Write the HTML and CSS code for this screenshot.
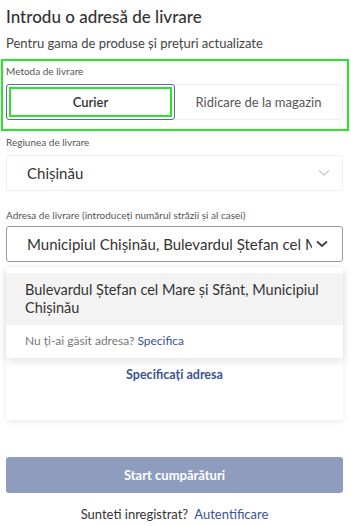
FILE: index.html
```html
<!DOCTYPE html>
<html lang="ro">
<head>
    <meta charset="UTF-8">
    <title>Adresa de livrare</title>
    <link rel="stylesheet" href="styles.css">
</head>
<body>
<div class="page">
    <h1 class="title">Introdu o adresă de livrare</h1>
    <p class="subtitle">Pentru gama de produse și prețuri actualizate</p>

    <!-- metoda de livrare -->
    <div class="method">
        <div class="label">Metoda de livrare</div>
        <div class="segments">
            <div class="seg seg-active"><span class="seg-inner">Curier</span></div>
            <div class="seg">Ridicare de la magazin</div>
        </div>
    </div>

    <div class="label label-region">Regiunea de livrare</div>
    <div class="select">
        <span>Chișinău</span>
        <svg class="chev chev-light" width="12" height="8" viewBox="0 0 12 8"><polyline points="1,1.5 6,6 11,1.5" fill="none" stroke="currentColor" stroke-width="1.4"/></svg>
    </div>

    <div class="label label-address">Adresa de livrare (introduceți numărul străzii și al casei)</div>
    <div class="select select-input">
        <span class="clip">Municipiul Chișinău, Bulevardul Ștefan cel Mare și Sfânt</span>
        <svg class="chev" width="12" height="8" viewBox="0 0 12 8"><polyline points="1,1.5 6,6 11,1.5" fill="none" stroke="currentColor" stroke-width="2"/></svg>
    </div>

    <!-- card cu lista de sugestii -->
    <div class="card">
        <div class="dropdown">
            <div class="option">Bulevardul Ștefan cel Mare și Sfânt, Municipiul Chișinău</div>
            <div class="notfound">Nu ți-ai găsit adresa? <a href="#">Specifica</a></div>
        </div>
        <div class="specify">Specificați adresa</div>
    </div>

    <button class="start">Start cumpărături</button>
    <p class="login">Sunteti inregistrat?&nbsp; <a href="#">Autentificare</a></p>
</div>
</body>
</html>
```

FILE: styles.css
```css
* {
    margin: 0;
    padding: 0;
    box-sizing: border-box;
}

body {
    font-family: Lato, "Noto Sans", sans-serif;
    color: #333;
    background: #fff;
}

a {
    color: #3b5394;
    text-decoration: none;
}

.page {
    padding: 0 8px 0 6px;
}

.title {
    font-size: 17px;
    font-weight: 500;
    line-height: 22px;
    padding-top: 6px;
    color: #333;
}

.subtitle {
    font-size: 13px;
    line-height: 18px;
    margin-top: 6px;
    color: #444;
}

.method {
    margin: 7px -6px 0 -5px;
    border: 2px solid #2be52b;
    padding: 1px 4px 9px 3px;
}

.label {
    font-size: 10px;
    line-height: 14px;
    color: #555;
}

.method .label {
    padding-top: 2px;
}

.segments {
    display: flex;
    margin-top: 6px;
    height: 36px;
}

.seg {
    flex: 1;
    display: flex;
    align-items: center;
    justify-content: center;
    font-size: 13px;
    color: #555;
    border: 1px solid #f0f0f0;
    border-left: none;
    border-radius: 0 3px 3px 0;
}

.seg-active {
    flex: 0 0 169px;
    border: 1px solid #5b6c91;
    border-radius: 3px;
    padding: 2px;
    color: #333;
    font-weight: 600;
}

.seg-inner {
    width: 100%;
    height: 100%;
    border: 2px solid #2be52b;
    display: flex;
    align-items: center;
    justify-content: center;
}

.label-region {
    margin-top: 4px;
}

.select {
    margin-top: 6px;
    height: 36px;
    border: 1px solid #f0f0f0;
    border-radius: 3px;
    display: flex;
    align-items: center;
    padding: 0 12px 0 20px;
    font-size: 15px;
    color: #333;
}

.select span {
    flex: 1;
}

.chev {
    color: #444;
    flex: none;
}

.chev-light {
    color: #ccc;
}

.label-address {
    margin-top: 17px;
}

.select-input {
    margin-top: 4px;
    border-color: #999;
    padding-right: 14px;
}

.clip {
    white-space: nowrap;
    overflow: hidden;
    margin-right: 4px;
}

.card {
    margin-top: 5px;
    height: 153px;
    background: #fff;
    border-radius: 3px;
    box-shadow: 0 2px 6px rgba(0, 0, 0, 0.08);
    position: relative;
}

.dropdown {
    position: absolute;
    top: 0;
    left: 0;
    right: 0;
    padding-top: 6px;
    background: #fff;
    border-radius: 3px;
    box-shadow: 0 3px 8px rgba(0, 0, 0, 0.12);
    z-index: 1;
}

.option {
    background: #f3f3f3;
    font-size: 14.5px;
    line-height: 18px;
    color: #333;
    padding: 8px 12px 8px 19px;
}

.notfound {
    font-size: 12px;
    color: #777;
    padding: 8px 19px 10px;
}

.specify {
    position: absolute;
    top: 100px;
    left: 0;
    right: 0;
    text-align: center;
    font-size: 12.5px;
    font-weight: 700;
    color: #3b5394;
}

.start {
    display: block;
    width: 100%;
    height: 36px;
    margin-top: 37px;
    background: #8e9dbe;
    border: none;
    border-radius: 3px;
    color: #fff;
    font-family: inherit;
    font-size: 13px;
    font-weight: 700;
}

.login {
    text-align: center;
    font-size: 13px;
    margin-top: 13px;
    color: #333;
}
```
